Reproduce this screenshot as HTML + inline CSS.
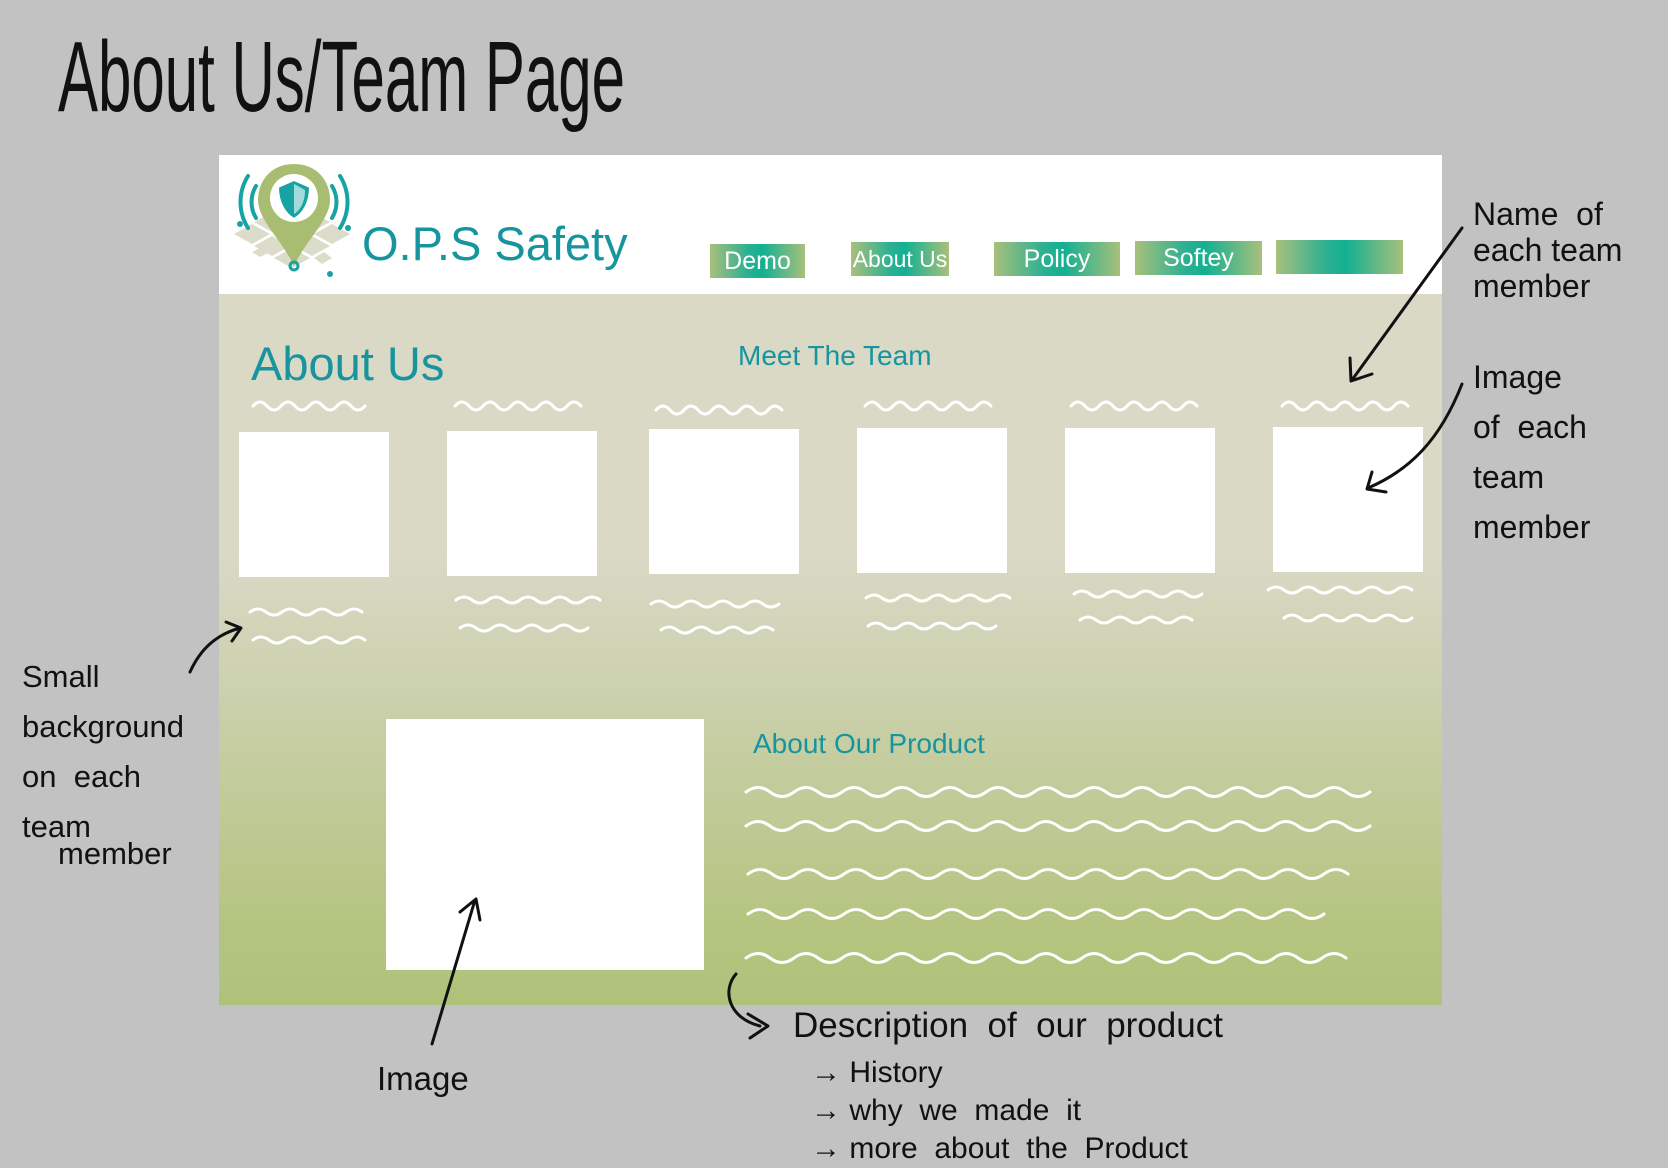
<!DOCTYPE html>
<html><head><meta charset="utf-8"><style>
html,body{margin:0;padding:0}
body{width:1668px;height:1159px;background:#c2c2c2;position:relative;overflow:hidden;font-family:"Liberation Sans",sans-serif}
.a{position:absolute}
.hand{font-family:"Liberation Sans",sans-serif;color:#111;white-space:nowrap}
#frame{left:219px;top:155px;width:1223px;height:850px;background:linear-gradient(#d9d9c6 0px,#d9d9c6 400px,#c3cc9d 620px,#b3c47e 780px,#afc27a 850px)}
#hdr{left:219px;top:155px;width:1223px;height:139px;background:#fff}
.nav{height:34px;background:linear-gradient(90deg,#a8c07c 0%,#2bb092 40%,#12b091 55%,#a8c07c 100%);color:#fff;font-size:25px;text-align:center;line-height:34px;white-space:nowrap;overflow:hidden}
.box{background:#fff}
.teal{color:#17959f}
</style></head><body>
<div class="a hand" style="left:58px;top:20px;font-size:100px;transform:scaleX(0.6);transform-origin:left top;">About Us/Team Page</div>
<div id="frame" class="a"></div>
<div id="hdr" class="a"></div>
<svg class="a" style="left:232px;top:162px" width="124" height="122" viewBox="0 0 124 122">
<g fill="#dcdccb">
<polygon points="2,72 20,62 38,72 20,82"/><polygon points="22,60 40,50 58,60 40,70"/><polygon points="42,72 60,62 78,72 60,82"/><polygon points="62,60 80,50 98,60 80,70"/><polygon points="82,72 100,62 118,72 100,82"/><polygon points="22,84 40,74 58,84 40,94"/><polygon points="62,84 80,74 98,84 80,94"/><polygon points="42,96 60,86 78,96 60,106"/><polygon points="20,90 30,85 38,90 28,95"/><polygon points="82,96 92,90 100,96 90,102"/>
</g>
<path d="M62 2 C38 2 26 20 26 38 C26 58 50 78 62 104 C74 78 98 58 98 38 C98 20 86 2 62 2Z" fill="#a8bd72"/>
<circle cx="62" cy="36" r="24" fill="#fff"/>
<path d="M62 18 L78 25 C78 41 71 52 62 57 C53 52 46 41 46 25Z" fill="#17a3a3" stroke="#fff" stroke-width="2"/>
<path d="M62 22 L62 52 C69 48 73 39 73 28Z" fill="#fff" opacity="0.6"/>
<path d="M16 14 C6 30 6 50 16 66 M24 24 C18 34 18 46 24 56 M108 14 C118 30 118 50 108 66 M100 24 C106 34 106 46 100 56" stroke="#17a3a3" stroke-width="4" fill="none" stroke-linecap="round"/>
<circle cx="62" cy="104" r="4" fill="none" stroke="#17a3a3" stroke-width="3"/>
<circle cx="8" cy="62" r="3" fill="#17a3a3"/><circle cx="116" cy="66" r="3" fill="#17a3a3"/><circle cx="98" cy="112" r="3" fill="#17a3a3"/>
</svg>
<div class="a teal" style="left:362px;top:216px;font-size:47px">O.P.S Safety</div>
<div class="a nav" style="left:710px;top:244px;width:95px">Demo</div>
<div class="a nav" style="left:851px;top:242px;width:98px;font-size:23px">About Us</div>
<div class="a nav" style="left:994px;top:242px;width:126px">Policy</div>
<div class="a nav" style="left:1135px;top:241px;width:127px">Softey</div>
<div class="a nav" style="left:1276px;top:240px;width:127px"></div>
<div class="a teal" style="left:251px;top:336px;font-size:47px">About Us</div>
<div class="a teal" style="left:738px;top:340px;font-size:28px">Meet The Team</div>
<div class="a box" style="left:239px;top:432px;width:150px;height:145px"></div>
<div class="a box" style="left:447px;top:431px;width:150px;height:145px"></div>
<div class="a box" style="left:649px;top:429px;width:150px;height:145px"></div>
<div class="a box" style="left:857px;top:428px;width:150px;height:145px"></div>
<div class="a box" style="left:1065px;top:428px;width:150px;height:145px"></div>
<div class="a box" style="left:1273px;top:427px;width:150px;height:145px"></div>
<div class="a box" style="left:386px;top:719px;width:318px;height:251px"></div>
<div class="a teal" style="left:753px;top:728px;font-size:28px">About Our Product</div>
<svg class="a" style="left:0;top:0" width="1668" height="1159">
<g stroke="#fff" stroke-width="3" fill="none" stroke-linecap="round">
<path d="M253 406 q7 -8 14 0 t14 0 t14 0 t14 0 t14 0 t14 0 t14 0 t14 0"/>
<path d="M455 406 q7 -8 14 0 t14 0 t14 0 t14 0 t14 0 t14 0 t14 0 t14 0 t14 0"/>
<path d="M656 410 q7 -8 14 0 t14 0 t14 0 t14 0 t14 0 t14 0 t14 0 t14 0 t14 0"/>
<path d="M865 406 q7 -8 14 0 t14 0 t14 0 t14 0 t14 0 t14 0 t14 0 t14 0 t14 0"/>
<path d="M1071 406 q7 -8 14 0 t14 0 t14 0 t14 0 t14 0 t14 0 t14 0 t14 0 t14 0"/>
<path d="M1282 406 q7 -8 14 0 t14 0 t14 0 t14 0 t14 0 t14 0 t14 0 t14 0 t14 0"/>
<path d="M250 612 q8 -6 16 0 t16 0 t16 0 t16 0 t16 0 t16 0 t16 0 M253 640 q8 -6 16 0 t16 0 t16 0 t16 0 t16 0 t16 0 t16 0"/>
<path d="M456 600 q8 -6 16 0 t16 0 t16 0 t16 0 t16 0 t16 0 t16 0 t16 0 t16 0 M460 628 q8 -6 16 0 t16 0 t16 0 t16 0 t16 0 t16 0 t16 0 t16 0"/>
<path d="M651 604 q8 -6 16 0 t16 0 t16 0 t16 0 t16 0 t16 0 t16 0 t16 0 M661 630 q8 -6 16 0 t16 0 t16 0 t16 0 t16 0 t16 0 t16 0"/>
<path d="M866 598 q8 -6 16 0 t16 0 t16 0 t16 0 t16 0 t16 0 t16 0 t16 0 t16 0 M868 626 q8 -6 16 0 t16 0 t16 0 t16 0 t16 0 t16 0 t16 0 t16 0"/>
<path d="M1074 594 q8 -6 16 0 t16 0 t16 0 t16 0 t16 0 t16 0 t16 0 t16 0 M1080 620 q8 -6 16 0 t16 0 t16 0 t16 0 t16 0 t16 0 t16 0"/>
<path d="M1268 590 q8 -6 16 0 t16 0 t16 0 t16 0 t16 0 t16 0 t16 0 t16 0 t16 0 M1284 618 q8 -6 16 0 t16 0 t16 0 t16 0 t16 0 t16 0 t16 0 t16 0"/>
<path d="M746 792 q12 -9 24 0 t24 0 t24 0 t24 0 t24 0 t24 0 t24 0 t24 0 t24 0 t24 0 t24 0 t24 0 t24 0 t24 0 t24 0 t24 0 t24 0 t24 0 t24 0 t24 0 t24 0 t24 0 t24 0 t24 0 t24 0 t24 0"/>
<path d="M746 826 q12 -9 24 0 t24 0 t24 0 t24 0 t24 0 t24 0 t24 0 t24 0 t24 0 t24 0 t24 0 t24 0 t24 0 t24 0 t24 0 t24 0 t24 0 t24 0 t24 0 t24 0 t24 0 t24 0 t24 0 t24 0 t24 0 t24 0"/>
<path d="M748 874 q12 -9 24 0 t24 0 t24 0 t24 0 t24 0 t24 0 t24 0 t24 0 t24 0 t24 0 t24 0 t24 0 t24 0 t24 0 t24 0 t24 0 t24 0 t24 0 t24 0 t24 0 t24 0 t24 0 t24 0 t24 0 t24 0"/>
<path d="M748 914 q12 -9 24 0 t24 0 t24 0 t24 0 t24 0 t24 0 t24 0 t24 0 t24 0 t24 0 t24 0 t24 0 t24 0 t24 0 t24 0 t24 0 t24 0 t24 0 t24 0 t24 0 t24 0 t24 0 t24 0 t24 0"/>
<path d="M746 958 q12 -9 24 0 t24 0 t24 0 t24 0 t24 0 t24 0 t24 0 t24 0 t24 0 t24 0 t24 0 t24 0 t24 0 t24 0 t24 0 t24 0 t24 0 t24 0 t24 0 t24 0 t24 0 t24 0 t24 0 t24 0 t24 0"/>
</g>
<g stroke="#111" stroke-width="3" fill="none" stroke-linecap="round" stroke-linejoin="round">
<path d="M1462 228 L1352 380 M1350 358 L1351 381 L1372 374"/>
<path d="M1462 384 C1440 440 1410 470 1368 488 M1372 472 L1367 489 L1386 492"/>
<path d="M190 672 C200 650 215 635 240 628 M226 622 L241 628 L232 641"/>
<path d="M432 1044 L475 900 M460 912 L476 899 L480 920"/>
<path d="M736 974 C722 990 728 1018 760 1026 M748 1014 L768 1026 L750 1038"/>
</g>
</svg>
<div class="a hand" style="left:1473px;top:196px;font-size:32px;line-height:36px">Name &nbsp;of<br>each team<br>member</div>
<div class="a hand" style="left:1473px;top:352px;font-size:32px;line-height:50px">Image<br>of &nbsp;each<br>team<br>member</div>
<div class="a hand" style="left:22px;top:652px;font-size:31px;line-height:50px">Small<br>background<br>on &nbsp;each<br>team</div>
<div class="a hand" style="left:58px;top:836px;font-size:31px">member</div>
<div class="a hand" style="left:377px;top:1060px;font-size:33px">Image</div>
<div class="a hand" style="left:793px;top:1006px;font-size:35px">Description &nbsp;of &nbsp;our &nbsp;product</div>
<div class="a hand" style="left:811px;top:1054px;font-size:30px;line-height:38px">→ History<br>→ why &nbsp;we &nbsp;made &nbsp;it<br>→ more &nbsp;about &nbsp;the &nbsp;Product</div>
</body></html>
